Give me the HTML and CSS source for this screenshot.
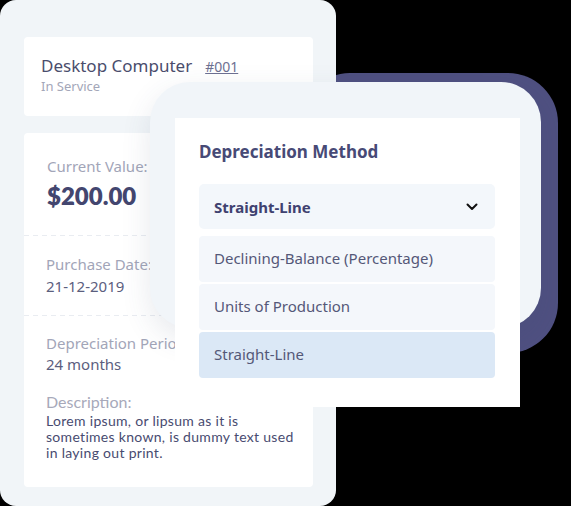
FILE: index.html
```html
<!DOCTYPE html>
<html lang="en">
<head>
<meta charset="utf-8">
<title>Asset depreciation</title>
<link rel="stylesheet" href="styles.css">
</head>
<body>
<div class="stage">
  <div class="glow"></div>

  <section class="asset-panel">
    <div class="card head-card">
      <div class="title-row">
        <span class="asset-name">Desktop Computer</span>
        <a class="asset-id">#001</a>
      </div>
      <div class="asset-status">In Service</div>
    </div>

    <div class="card detail-card">
      <div class="section sec-value">
        <div class="label">Current Value:</div>
        <div class="price">$200.00</div>
      </div>
      <div class="section sec-date">
        <div class="label">Purchase Date:</div>
        <div class="value">21-12-2019</div>
      </div>
      <div class="section sec-period">
        <div class="label">Depreciation Period:</div>
        <div class="value">24 months</div>
        <div class="label desc-label">Description:</div>
        <p class="desc">Lorem ipsum, or lipsum as it is sometimes known, is dummy text used in laying out print.</p>
      </div>
    </div>
  </section>

  <section class="method-panel">
    <div class="method-card">
      <h2 class="method-title">Depreciation Method</h2>
      <div class="select">
        <span>Straight-Line</span>
        <svg class="chev" width="12" height="8" viewBox="0 0 12 8"><path d="M1.5 1.5 L6 6 L10.5 1.5" fill="none" stroke="#111" stroke-width="2" stroke-linecap="round" stroke-linejoin="round"/></svg>
      </div>
      <ul class="options">
        <li class="option">Declining-Balance (Percentage)</li>
        <li class="option">Units of Production</li>
        <li class="option selected">Straight-Line</li>
      </ul>
    </div>
  </section>
</div>
</body>
</html>
```

FILE: styles.css
```css
* { box-sizing: border-box; }

html, body {
  margin: 0;
  padding: 0;
  background: #000;
}

.stage {
  position: relative;
  width: 571px;
  height: 506px;
  overflow: hidden;
  font-family: "Noto Sans", "DejaVu Sans", sans-serif;
}

.glow {
  position: absolute;
  left: 300px;
  top: 73px;
  width: 258px;
  height: 280px;
  border-radius: 50px;
  background: #4f5081;
  z-index: 0;
}

/* Left panel */
.asset-panel {
  position: relative;
  z-index: 1;
  width: 336px;
  height: 506px;
  background: #f1f5f8;
  border-radius: 16px;
  padding: 37px 23px 19px 24px;
  display: flex;
  flex-direction: column;
  gap: 17px;
}

.card {
  background: #fff;
  border-radius: 4px;
}

.head-card {
  height: 79px;
  padding: 17px 17px 0 17px;
}

.title-row {
  display: flex;
  align-items: baseline;
  gap: 13px;
}

.asset-name {
  font-size: 17px;
  line-height: 24px;
  color: #4a4d6c;
}

.asset-id {
  font-size: 14px;
  color: #6e7192;
  text-decoration: underline;
}

.asset-status {
  font-size: 13px;
  line-height: 16px;
  color: #a3a6b8;
}

.detail-card {
  flex: 1;
  display: flex;
  flex-direction: column;
  padding: 0;
}

.section {
  padding-left: 22px;
}

.sec-value {
  height: 102px;
  padding-top: 23px;
  padding-left: 23px;
}

.sec-date {
  height: 80px;
  padding-top: 19px;
  background: repeating-linear-gradient(90deg, #e9ecf1 0 5px, transparent 5px 9px) top left / 100% 1px no-repeat;
}

.sec-period {
  flex: 1;
  padding-top: 18px;
  background: repeating-linear-gradient(90deg, #e9ecf1 0 5px, transparent 5px 9px) top left / 100% 1px no-repeat;
}

.label {
  font-size: 15px;
  line-height: 20px;
  color: #a2a5b8;
  white-space: nowrap;
}

.price {
  margin-top: 6px;
  font-family: Lato, "Noto Sans", sans-serif;
  font-weight: 800;
  font-size: 24px;
  line-height: 28px;
  color: #43466f;
}

.value {
  margin-top: 2px;
  font-size: 15px;
  line-height: 20px;
  color: #5b5e7e;
}

.sec-period .value {
  margin-top: 1px;
}

.desc-label {
  margin-top: 18px;
  font-family: Lato, "Noto Sans", sans-serif;
  font-size: 16px;
  color: #a7a9ba;
}

.desc {
  margin: 1px 0 0;
  width: 252px;
  font-family: Lato, "Noto Sans", sans-serif;
  font-size: 14px;
  line-height: 16px;
  letter-spacing: 0.3px;
  color: #484b70;
}

/* Overlay panel */
.method-panel {
  position: absolute;
  z-index: 2;
  left: 150px;
  top: 82px;
  width: 391px;
  height: 246px;
  background: #f1f5f9;
  border-radius: 40px;
  padding: 36px 21px 0 25px;
  box-shadow: 0 10px 30px rgba(60, 70, 110, 0.12);
}

.method-card {
  width: 345px;
  height: 289px;
  background: #fff;
  padding: 22px 25px 0 24px;
}

.method-title {
  margin: 0 0 20px;
  font-size: 17px;
  line-height: 24px;
  font-weight: 700;
  color: #474a76;
}

.select {
  height: 45px;
  border-radius: 5px;
  background: #f3f7fb;
  display: flex;
  align-items: center;
  justify-content: space-between;
  padding: 0 17px 0 15px;
  font-size: 15px;
  font-weight: 700;
  color: #3f4270;
}

.options {
  list-style: none;
  margin: 7px 0 0;
  padding: 0;
  display: flex;
  flex-direction: column;
  gap: 2px;
}

.option {
  height: 46px;
  border-radius: 4px;
  background: #f4f7fb;
  display: flex;
  align-items: center;
  padding-left: 15px;
  padding-bottom: 2px;
  font-size: 15px;
  color: #545878;
}

.option.selected {
  background: #dbe8f6;
}
```
